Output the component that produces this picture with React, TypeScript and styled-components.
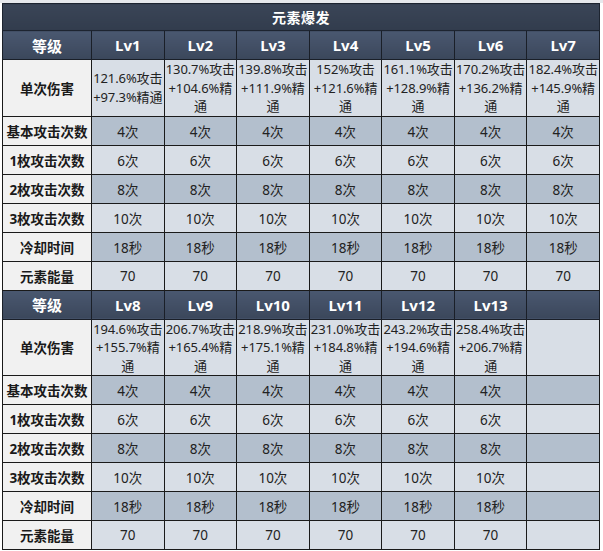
import React from 'react';
import styled, { createGlobalStyle } from 'styled-components';

const GlobalStyle = createGlobalStyle`
  body {
    margin: 0;
    background: #ffffff;
    font-family: "Noto Sans", "Noto Sans CJK SC", sans-serif;
  }
`;

type Section = {
  levels: string[];
  damage: string[][];
};

const ROW_LABELS = ['基本攻击次数', '1枚攻击次数', '2枚攻击次数', '3枚攻击次数', '冷却时间', '元素能量'];
const ROW_VALUES = ['4次', '6次', '8次', '10次', '18秒', '70'];

const sections: Section[] = [
  {
    levels: ['Lv1', 'Lv2', 'Lv3', 'Lv4', 'Lv5', 'Lv6', 'Lv7'],
    damage: [
      ['121.6%攻击', '+97.3%精通'],
      ['130.7%攻击', '+104.6%精', '通'],
      ['139.8%攻击', '+111.9%精', '通'],
      ['152%攻击', '+121.6%精', '通'],
      ['161.1%攻击', '+128.9%精', '通'],
      ['170.2%攻击', '+136.2%精', '通'],
      ['182.4%攻击', '+145.9%精', '通'],
    ],
  },
  {
    levels: ['Lv8', 'Lv9', 'Lv10', 'Lv11', 'Lv12', 'Lv13', ''],
    damage: [
      ['194.6%攻击', '+155.7%精', '通'],
      ['206.7%攻击', '+165.4%精', '通'],
      ['218.9%攻击', '+175.1%精', '通'],
      ['231.0%攻击', '+184.8%精', '通'],
      ['243.2%攻击', '+194.6%精', '通'],
      ['258.4%攻击', '+206.7%精', '通'],
      [],
    ],
  },
];

const Page = styled.div`
  width: 603px;
  height: 551px;
  padding: 3px 3px 0 2px;
  box-sizing: border-box;
  background: linear-gradient(#e6e8ec 0, #e6e8ec 3px, #ffffff 3px);
`;

const Table = styled.table`
  width: 598px;
  border-collapse: collapse;
  table-layout: fixed;
`;

const LabelCol = styled.col`
  width: 89px;
`;

const LevelCol = styled.col``;

const TitleCell = styled.td`
  height: 26px;
  padding: 0;
  background: linear-gradient(#3a4557, #323c4d);
  color: #ffffff;
  font-weight: 700;
  font-size: 14px;
  text-align: center;
  border: 1px solid #1d2430;
  letter-spacing: 0.5px;
`;

const HeadCell = styled.td`
  height: 28px;
  padding: 0;
  background: linear-gradient(#4a5870, #3b475b);
  color: #ffffff;
  font-weight: 700;
  font-size: 15px;
  text-align: center;
  border: 1px solid #1a1f28;
`;

const LabelCell = styled.td<{ $tall?: boolean }>`
  height: ${(p) => (p.$tall ? '55px' : '28px')};
  padding: 0;
  background: #f1f1f1;
  color: #1a1a1a;
  font-weight: 700;
  font-size: 13.5px;
  text-align: center;
  white-space: nowrap;
  border: 1px solid #1a1a1a;
`;

const DataCell = styled.td<{ $dark?: boolean }>`
  padding: 0;
  background: ${(p) => (p.$dark ? '#b3bfcd' : '#d8dee6')};
  color: #222222;
  font-size: 13.5px;
  text-align: center;
  border: 1px solid #1a1a1a;
`;

const DamageCell = styled(DataCell)`
  font-size: 13px;
  line-height: 18.5px;
  letter-spacing: -0.1px;
`;

const Line = styled.div`
  white-space: nowrap;
`;

export default function App() {
  return (
    <>
      <GlobalStyle />
      <Page>
        <Table>
          <colgroup>
            <LabelCol />
            {Array.from({ length: 7 }).map((_, i) => (
              <LevelCol key={i} />
            ))}
          </colgroup>
          <tbody>
            <tr>
              <TitleCell colSpan={8}>元素爆发</TitleCell>
            </tr>
            {sections.map((sec, si) => (
              <React.Fragment key={si}>
                <tr>
                  <HeadCell>等级</HeadCell>
                  {sec.levels.map((lv, i) => (
                    <HeadCell key={i}>{lv}</HeadCell>
                  ))}
                </tr>
                <tr>
                  <LabelCell $tall>单次伤害</LabelCell>
                  {sec.damage.map((lines, i) => (
                    <DamageCell key={i}>
                      {lines.map((l, j) => (
                        <Line key={j}>{l}</Line>
                      ))}
                    </DamageCell>
                  ))}
                </tr>
                {ROW_LABELS.map((label, r) => (
                  <tr key={label}>
                    <LabelCell>{label}</LabelCell>
                    {sec.levels.map((lv, i) => (
                      <DataCell key={i} $dark={r % 2 === 0}>
                        {lv ? ROW_VALUES[r] : ''}
                      </DataCell>
                    ))}
                  </tr>
                ))}
              </React.Fragment>
            ))}
          </tbody>
        </Table>
      </Page>
    </>
  );
}
